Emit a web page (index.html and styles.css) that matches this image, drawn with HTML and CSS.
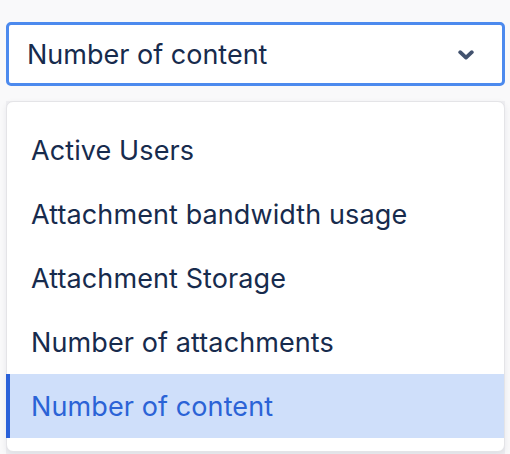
FILE: index.html
```html
<!DOCTYPE html>
<html>
<head>
<meta charset="utf-8">
<link rel="stylesheet" href="styles.css">
</head>
<body>
<div class="picker">
  <div class="select">
    <span class="select-value">Number of content</span>
    <svg class="chevron" width="16" height="10" viewBox="0 0 16 10"><path d="M2.2 2.2 L8 7.6 L13.8 2.2" fill="none" stroke="#42526e" stroke-width="3.8" stroke-linecap="round" stroke-linejoin="round"/></svg>
  </div>
  <div class="behind">
    <div class="behind-row r1"></div>
    <div class="behind-row r2"></div>
    <div class="behind-accent"></div>
    <div class="behind-row r3"></div>
  </div>
  <ul class="menu">
    <li class="option">Active Users</li>
    <li class="option">Attachment bandwidth usage</li>
    <li class="option">Attachment Storage</li>
    <li class="option">Number of attachments</li>
    <li class="option selected">Number of content</li>
  </ul>
</div>
</body>
</html>
```
FILE: styles.css
```css
html, body {
  margin: 0;
  padding: 0;
  background: #f9f9fa;
  font-family: Inter, "Noto Sans", sans-serif;
  color: #172b4d;
  overflow: hidden;
}
.picker {
  position: relative;
  padding: 22px 5px 0 6px;
}
.select {
  box-sizing: border-box;
  height: 64px;
  width: 499px;
  border: 3px solid #4c8aee;
  border-radius: 5px;
  background: #fff;
  display: flex;
  align-items: center;
  justify-content: space-between;
  padding: 0 28px 0 18px;
}
.select-value {
  font-size: 27px;
  line-height: 1;
  color: #172b4d;
}
.chevron {
  display: block;
  margin-top: 1px;
}
.behind {
  margin-top: 15px;
  height: 360px;
  background: #efeff2;
  display: flex;
  flex-direction: column;
}
.behind-row {
  height: 2px;
  background: #d5d6dc;
}
.r1 { margin-top: 24px; }
.r2 { margin-top: 98px; }
.behind-accent {
  margin-top: 5px;
  height: 4px;
  background: #2f66d8;
}
.r3 { margin-top: 186px; }
.menu {
  position: absolute;
  left: 6px;
  top: 101px;
  width: 499px;
  box-sizing: border-box;
  margin: 0;
  padding: 16px 0 13px;
  list-style: none;
  background: #fff;
  border: 1px solid #e4e4e7;
  border-radius: 7px;
  box-shadow: 0 2px 6px rgba(9, 30, 66, 0.08);
}
.option {
  height: 64px;
  display: flex;
  align-items: center;
  padding-left: 21px;
  font-size: 27px;
  letter-spacing: 0.1px;
  color: #172b4d;
  box-sizing: border-box;
  border-left: 4px solid transparent;
  margin-left: -1px;
}
.option.selected {
  background: #cfdffa;
  border-left-color: #2b62d9;
  color: #2b63d6;
}
```
